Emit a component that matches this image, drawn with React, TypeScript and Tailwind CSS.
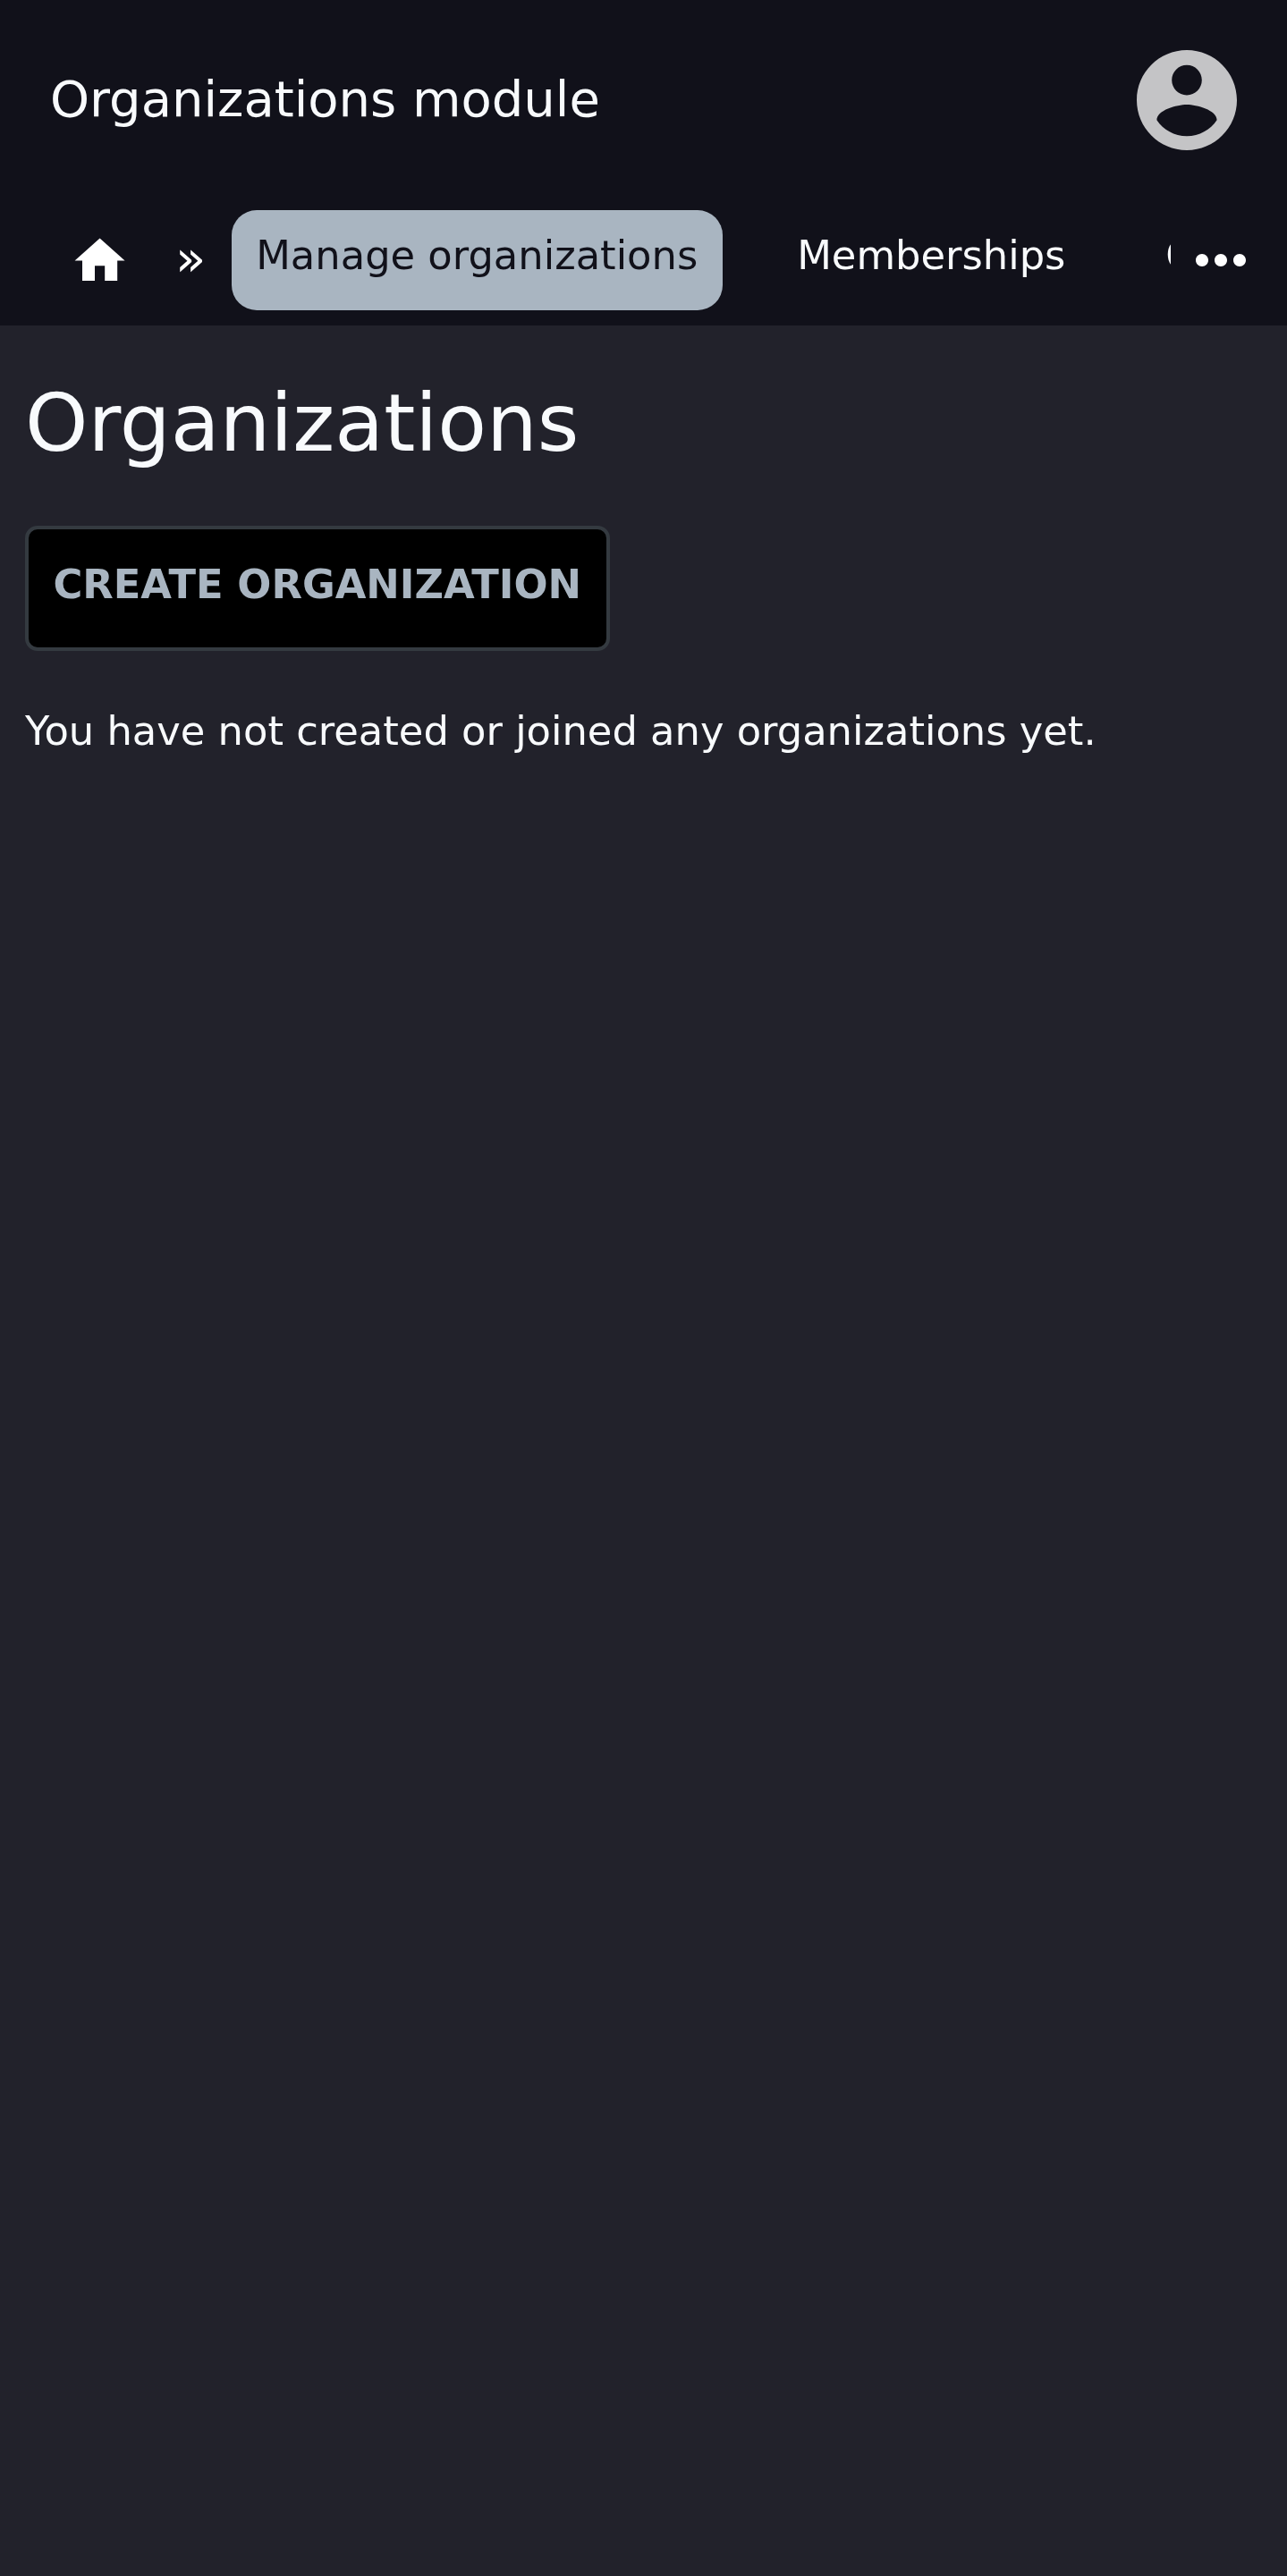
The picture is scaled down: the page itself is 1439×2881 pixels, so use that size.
const navItem = "mx-7 h-28 shrink-0 rounded-[28px] pr-[28.2px] pl-[27.2px] pt-[24px] text-[44.8px] leading-[54px] whitespace-nowrap will-change-transform";

export default function App() {
  return (
    <div className="min-h-[2881px] overflow-hidden bg-[#22222b] text-[#f8fafc] [font-family:'DejaVu_Sans',sans-serif]">
      <header className="h-[364px] bg-[#11111a]">
        <div className="flex h-[224px] items-center justify-between pr-[56.4px] pl-[56px]">
          <span className="pb-[2px] text-[56px] leading-[66px] whitespace-nowrap will-change-transform">Organizations module</span>
          <svg viewBox="2 2 20 20" className="size-28 shrink-0" fill="#c4c4c6">
            <path d="M12 2C6.48 2 2 6.48 2 12s4.48 10 10 10 10-4.48 10-10S17.52 2 12 2zm0 3c1.66 0 3 1.34 3 3s-1.34 3-3 3-3-1.34-3-3 1.34-3 3-3zm0 14.2c-2.5 0-4.71-1.28-6-3.22.03-1.99 4-3.08 6-3.08 1.99 0 5.97 1.09 6 3.08-1.29 1.94-3.5 3.22-6 3.22z" />
          </svg>
        </div>
        <nav className="flex h-[140px] pt-[11px]">
          <div className="flex w-[1309px] overflow-hidden">
            <a className="mt-[23px] ml-[78.4px] size-[67.2px] shrink-0">
              <svg viewBox="0 0 24 24" className="size-full" fill="#fff">
                <path d="M10 20v-6h4v6h5v-8h3L12 3 2 12h3v8z" />
              </svg>
            </a>
            <span className="mt-[27px] ml-[50.4px] w-[35px] shrink-0 text-[56px] leading-[54px] text-white will-change-transform">»</span>
            <a className={navItem + " bg-[#a9b5c1] text-[#11111a]"}>Manage organizations</a>
            <a className={navItem}>Memberships</a>
            <a className={navItem}>Organizations</a>
          </div>
          <svg viewBox="0 0 24 24" className="mt-[13.8px] ml-[14px] size-[84px] shrink-0" fill="#fff">
            <path d="M6 10c-1.1 0-2 .9-2 2s.9 2 2 2 2-.9 2-2-.9-2-2-2zm12 0c-1.1 0-2 .9-2 2s.9 2 2 2 2-.9 2-2-.9-2-2-2zm-6 0c-1.1 0-2 .9-2 2s.9 2 2 2 2-.9 2-2-.9-2-2-2z" />
          </svg>
        </nav>
      </header>
      <main className="flex flex-col items-start px-7 pt-[55px] will-change-transform">
        <h1 className="text-[89.6px] leading-[108px]">Organizations</h1>
        <button className="mt-[61px] h-[140px] rounded-[14px] border-[4px] border-[#343a40] bg-black pr-7 pl-[27.4px] pb-[8px] text-[44.8px] leading-[54px] font-bold whitespace-nowrap text-[#a9b5c1]">
          CREATE ORGANIZATION
        </button>
        <p className="mt-[63px] text-[44.8px] leading-[54px] whitespace-nowrap">You have not created or joined any organizations yet.</p>
      </main>
    </div>
  );
}
